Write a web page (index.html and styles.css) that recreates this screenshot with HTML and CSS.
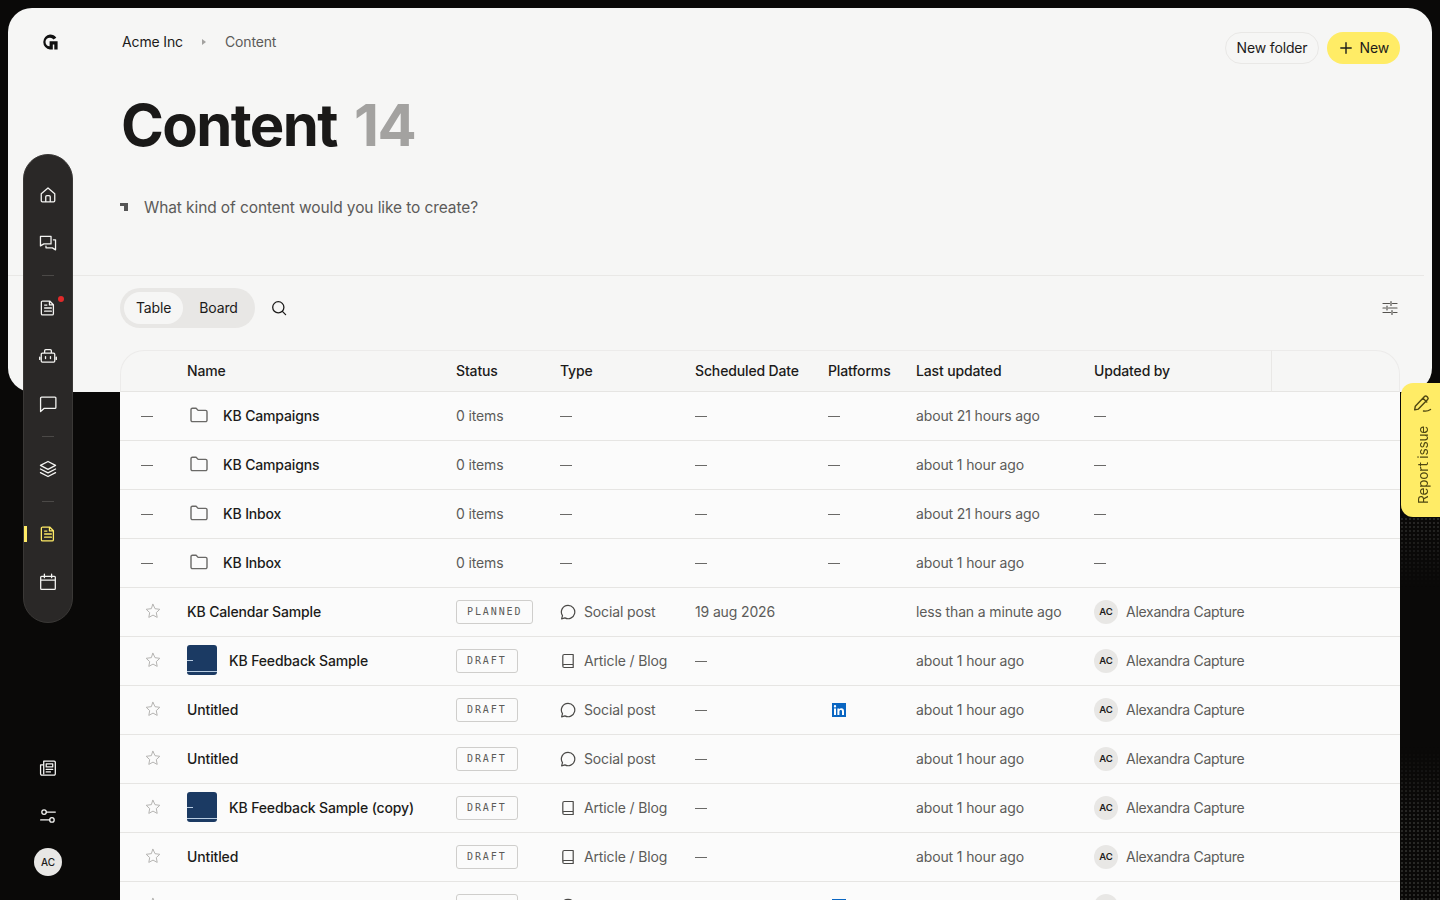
FILE: index.html
```html
<!DOCTYPE html>
<html lang="en">
<head>
    <meta charset="UTF-8">
    <meta name="viewport" content="width=device-width, initial-scale=1.0">
    <title>Content</title>
    <link rel="stylesheet" href="styles.css">
</head>
<body>

    <svg width="0" height="0" class="defs">
        <symbol id="i-doc" viewBox="0 0 16 16"><path d="M3.2 1.800h6.300l3.300 3.300v8a1.100 1.100 0 0 1-1.100 1.100H3.200a1.100 1.100 0 0 1-1.100-1.100V2.900a1.100 1.100 0 0 1 1.100-1.100zM9.300 1.800v3.500h3.500M5 8h6M5 10.800h6M5 5.400h2"/></symbol>
        <symbol id="i-folder" viewBox="0 0 18 16"><path d="M1 2.600A1.400 1.400 0 0 1 2.400 1.200h3.700l2 2.200h7.500A1.400 1.400 0 0 1 17 4.800v8.400a1.400 1.400 0 0 1-1.400 1.400H2.400A1.400 1.400 0 0 1 1 13.200z"/></symbol>
        <symbol id="i-star" viewBox="0 0 16 16"><path d="M8 1.300l2 4.400 4.800.6-3.500 3.300.9 4.800L8 12.100l-4.200 2.300.9-4.800L1.200 6.300 6 5.700z"/></symbol>
        <symbol id="i-bubble" viewBox="0 0 16 16"><path d="M8 1.300a6.700 6.700 0 1 1-3.100 12.600l-3.300.9.900-3.100A6.700 6.700 0 0 1 8 1.300z"/></symbol>
        <symbol id="i-book" viewBox="0 0 16 16"><path d="M2.800 12.500V3a1.500 1.500 0 0 1 1.500-1.500h8.900v13H4.300a1.500 1.500 0 0 1 0-3h8.900"/></symbol>
    </svg>

    <div class="panel-bg"></div>

    <a class="logo" href="#">
        <svg viewBox="0 0 16 16" width="16" height="16"><path class="logo-mark" d="M8 0.500a7.500 7.500 0 0 1 6.300 3.300l-2.800 1.700A4.200 4.200 0 0 0 8 3.700a4.300 4.300 0 0 0-.4 8.600V7.300h8v8.300h-3.300v-5h-1.500v5H8a7.600 7.600 0 0 1 0-15.100z"/></svg>
    </a>

    <!-- rail -->
    <nav class="rail">
        <a class="rail-item" href="#"><svg viewBox="0 0 16 16"><path d="M2 6.800L8 1.800l6 5v6.400a1 1 0 0 1-1 1H3a1 1 0 0 1-1-1zM6 14.200V9.500a1 1 0 0 1 1-1h2a1 1 0 0 1 1 1v4.700"/></svg></a>
        <a class="rail-item" href="#"><svg viewBox="0 0 16 16"><path d="M1.300 2.200h9.400v6.600H4.300l-3 1.800zM12.800 5.200h1.900v8.900l-2.800-1.800H6.200v-1.600"/></svg></a>
        <span class="rail-sep"></span>
        <a class="rail-item rail-dot" href="#"><svg><use href="#i-doc"/></svg></a>
        <a class="rail-item" href="#"><svg viewBox="0 0 16 16"><path d="M3 5.500h10a1 1 0 0 1 1 1v6a1 1 0 0 1-1 1H3a1 1 0 0 1-1-1v-6a1 1 0 0 1 1-1zM5 5.500V3.300a1 1 0 0 1 1-1h4a1 1 0 0 1 1 1v2.200M5.800 8.500v1.800M10.200 8.500v1.800M.6 9v2M15.400 9v2"/></svg></a>
        <a class="rail-item" href="#"><svg viewBox="0 0 16 16"><path d="M2.300 1.900h11.900a.8.800 0 0 1 .8.800v8.300a.8.800 0 0 1-.8.800H4.700L1.400 14.700V2.800a.9.900 0 0 1 .9-.9z"/></svg></a>
        <span class="rail-sep"></span>
        <a class="rail-item" href="#"><svg viewBox="0 0 16 16"><path d="M8 1.300l6.700 3.500L8 8.300 1.300 4.800zM1.300 8L8 11.500 14.700 8M1.300 11.200L8 14.700l6.700-3.500"/></svg></a>
        <span class="rail-sep"></span>
        <a class="rail-item active" href="#"><svg><use href="#i-doc"/></svg></a>
        <a class="rail-item" href="#"><svg viewBox="0 0 16 16"><path d="M2.300 3h11.400a.8.800 0 0 1 .8.800v10a.8.800 0 0 1-.8.800H2.300a.8.800 0 0 1-.8-.8v-10a.8.800 0 0 1 .8-.8zM1.500 6.400h13M4.800 1v3.200M11.200 1v3.200"/></svg></a>
    </nav>

    <div class="rail-bottom">
        <a class="rail-item" href="#"><svg viewBox="0 0 16 16"><path d="M4.200 1.800h9.300a1 1 0 0 1 1 1v10.400a1.100 1.100 0 0 1-1.100 1.100H2.600a1.200 1.200 0 0 1-1.200-1.200V5.200h2.800M4.200 13V1.800M6.400 4.300h5.800v2.700H6.400zM6.400 9.300h5.800M6.400 11.500h3.800"/></svg></a>
        <a class="rail-item" href="#"><svg viewBox="0 0 16 16"><circle cx="4.500" cy="4.500" r="2"/><circle cx="11.500" cy="11.500" r="2"/><path d="M6.500 4.500h8M1.500 11.500h8"/></svg></a>
        <span class="rail-avatar">AC</span>
    </div>

    <div class="report">
        <svg viewBox="0 0 20 20"><path d="M3.300 13.200L12.500 3.500a1.700 1.700 0 0 1 2.400 0l.7.700a1.700 1.700 0 0 1 0 2.400l-9.200 9.500-3.700.8zM11 5.200l3.800 3.700M11.500 18c2.500.4 5-.1 7-1.500"/></svg>
        <span>Report issue</span>
    </div>

    <main class="main">
        <header class="topbar">
            <div class="crumbs">
                <a href="#">Acme Inc</a>
                <span class="crumb-arrow"></span>
                <span class="crumb-current">Content</span>
            </div>
            <div class="actions">
                <button class="btn btn-ghost">New folder</button>
                <button class="btn btn-new"><svg viewBox="0 0 12 12"><path d="M6 .8v10.400M.8 6h10.400"/></svg>New</button>
            </div>
        </header>

        <h1 class="title">Content <span>14</span></h1>

        <div class="prompt">
            <span class="prompt-mark"></span>
            <span>What kind of content would you like to create?</span>
        </div>

        <div class="divider"></div>

        <div class="toolbar">
            <div class="views">
                <button class="view on">Table</button>
                <button class="view">Board</button>
            </div>
            <button class="icon-btn"><svg viewBox="0 0 16 16"><circle cx="7.300" cy="7.300" r="5.600"/><path d="M11.400 11.400l3.200 3.200"/></svg></button>
            <button class="icon-btn settings"><svg viewBox="0 0 16 16"><path d="M1 3.500h6.500M10.500 3.500H15M1 8h2.500M6.500 8H15M1 12.500h7.500M11.500 12.500H15M9 1.500v4M5 6v4M10 10.500v4"/></svg></button>
        </div>

        <table class="grid">
            <colgroup>
                <col class="c-star"><col class="c-name"><col class="c-status"><col class="c-type"><col class="c-date"><col class="c-plat"><col class="c-upd"><col class="c-by"><col>
            </colgroup>
            <thead>
                <tr>
                    <th></th><th>Name</th><th>Status</th><th>Type</th><th>Scheduled Date</th><th>Platforms</th><th>Last updated</th><th class="th-by">Updated by</th><th></th>
                </tr>
            </thead>
            <tbody>
                <tr>
                    <td class="dash-cell"><i class="dash"></i></td>
                    <td><div class="name folder"><svg><use href="#i-folder"/></svg>KB Campaigns</div></td>
                    <td class="muted">0 items</td><td><i class="dash"></i></td><td><i class="dash"></i></td><td><i class="dash"></i></td>
                    <td class="muted">about 21 hours ago</td><td><i class="dash"></i></td><td></td>
                </tr>
                <tr>
                    <td class="dash-cell"><i class="dash"></i></td>
                    <td><div class="name folder"><svg><use href="#i-folder"/></svg>KB Campaigns</div></td>
                    <td class="muted">0 items</td><td><i class="dash"></i></td><td><i class="dash"></i></td><td><i class="dash"></i></td>
                    <td class="muted">about 1 hour ago</td><td><i class="dash"></i></td><td></td>
                </tr>
                <tr>
                    <td class="dash-cell"><i class="dash"></i></td>
                    <td><div class="name folder"><svg><use href="#i-folder"/></svg>KB Inbox</div></td>
                    <td class="muted">0 items</td><td><i class="dash"></i></td><td><i class="dash"></i></td><td><i class="dash"></i></td>
                    <td class="muted">about 21 hours ago</td><td><i class="dash"></i></td><td></td>
                </tr>
                <tr>
                    <td class="dash-cell"><i class="dash"></i></td>
                    <td><div class="name folder"><svg><use href="#i-folder"/></svg>KB Inbox</div></td>
                    <td class="muted">0 items</td><td><i class="dash"></i></td><td><i class="dash"></i></td><td><i class="dash"></i></td>
                    <td class="muted">about 1 hour ago</td><td><i class="dash"></i></td><td></td>
                </tr>
                <tr>
                    <td class="star-cell"><svg class="star"><use href="#i-star"/></svg></td>
                    <td><div class="name">KB Calendar Sample</div></td>
                    <td><span class="tag">PLANNED</span></td>
                    <td><div class="type"><svg><use href="#i-bubble"/></svg>Social post</div></td>
                    <td class="muted">19 aug 2026</td><td></td>
                    <td class="muted">less than a minute ago</td>
                    <td><div class="who"><span class="avatar">AC</span>Alexandra Capture</div></td><td></td>
                </tr>
                <tr>
                    <td class="star-cell"><svg class="star"><use href="#i-star"/></svg></td>
                    <td><div class="name"><span class="thumb"></span>KB Feedback Sample</div></td>
                    <td><span class="tag">DRAFT</span></td>
                    <td><div class="type"><svg><use href="#i-book"/></svg>Article / Blog</div></td>
                    <td><i class="dash"></i></td><td></td>
                    <td class="muted">about 1 hour ago</td>
                    <td><div class="who"><span class="avatar">AC</span>Alexandra Capture</div></td><td></td>
                </tr>
                <tr>
                    <td class="star-cell"><svg class="star"><use href="#i-star"/></svg></td>
                    <td><div class="name">Untitled</div></td>
                    <td><span class="tag">DRAFT</span></td>
                    <td><div class="type"><svg><use href="#i-bubble"/></svg>Social post</div></td>
                    <td><i class="dash"></i></td>
                    <td><svg class="linkedin" viewBox="0 0 14 14"><rect width="14" height="14" fill="#0a66c2"/><path fill="#fff" d="M2 5.400h2V12H2zM3 2a1.200 1.200 0 1 1 0 2.400A1.200 1.200 0 0 1 3 2zM5.400 5.400h1.900v.9c.4-.7 1.100-1.100 2-1.100 1.900 0 2.700 1.100 2.700 3V12h-2V8.600c0-1-.3-1.700-1.200-1.700-1 0-1.400.7-1.400 1.700V12h-2z"/></svg></td>
                    <td class="muted">about 1 hour ago</td>
                    <td><div class="who"><span class="avatar">AC</span>Alexandra Capture</div></td><td></td>
                </tr>
                <tr>
                    <td class="star-cell"><svg class="star"><use href="#i-star"/></svg></td>
                    <td><div class="name">Untitled</div></td>
                    <td><span class="tag">DRAFT</span></td>
                    <td><div class="type"><svg><use href="#i-bubble"/></svg>Social post</div></td>
                    <td><i class="dash"></i></td><td></td>
                    <td class="muted">about 1 hour ago</td>
                    <td><div class="who"><span class="avatar">AC</span>Alexandra Capture</div></td><td></td>
                </tr>
                <tr>
                    <td class="star-cell"><svg class="star"><use href="#i-star"/></svg></td>
                    <td><div class="name"><span class="thumb"></span>KB Feedback Sample (copy)</div></td>
                    <td><span class="tag">DRAFT</span></td>
                    <td><div class="type"><svg><use href="#i-book"/></svg>Article / Blog</div></td>
                    <td><i class="dash"></i></td><td></td>
                    <td class="muted">about 1 hour ago</td>
                    <td><div class="who"><span class="avatar">AC</span>Alexandra Capture</div></td><td></td>
                </tr>
                <tr>
                    <td class="star-cell"><svg class="star"><use href="#i-star"/></svg></td>
                    <td><div class="name">Untitled</div></td>
                    <td><span class="tag">DRAFT</span></td>
                    <td><div class="type"><svg><use href="#i-book"/></svg>Article / Blog</div></td>
                    <td><i class="dash"></i></td><td></td>
                    <td class="muted">about 1 hour ago</td>
                    <td><div class="who"><span class="avatar">AC</span>Alexandra Capture</div></td><td></td>
                </tr>
                <tr>
                    <td class="star-cell"><svg class="star"><use href="#i-star"/></svg></td>
                    <td><div class="name">Untitled</div></td>
                    <td><span class="tag">DRAFT</span></td>
                    <td><div class="type"><svg><use href="#i-bubble"/></svg>Social post</div></td>
                    <td><i class="dash"></i></td>
                    <td><svg class="linkedin" viewBox="0 0 14 14"><rect width="14" height="14" fill="#0a66c2"/></svg></td>
                    <td class="muted">about 1 hour ago</td>
                    <td><div class="who"><span class="avatar">AC</span>Alexandra Capture</div></td><td></td>
                </tr>
            </tbody>
        </table>
    </main>

</body>
</html>
```

FILE: styles.css
```css
* {
    box-sizing: border-box;
}

html, body {
    height: 100%;
}

body {
    margin: 0;
    background: #0a0908;
    color: #1c1b1a;
    font-family: Inter, "Liberation Sans", sans-serif;
    font-size: 14px;
    letter-spacing: -0.01em;
    overflow: hidden;
    position: relative;
}

a {
    color: inherit;
    text-decoration: none;
}

button {
    font: inherit;
    letter-spacing: inherit;
    color: inherit;
    border: none;
    background: none;
    padding: 0;
}

.defs {
    position: absolute;
}

svg {
    fill: none;
    stroke: currentColor;
    stroke-linecap: round;
    stroke-linejoin: round;
}

/* the light card behind the header */
.panel-bg {
    position: absolute;
    top: 8px;
    left: 8px;
    right: 8px;
    height: 384px;
    background: #f6f6f5;
    border-radius: 24px;
}

/* dots on the black background */
body::after {
    content: "";
    position: absolute;
    top: 517px;
    right: 0;
    width: 40px;
    height: 383px;
    background-image: radial-gradient(circle, #3a3a38 0.6px, transparent 0.9px);
    background-size: 4px 4px;
    -webkit-mask-image: linear-gradient(to bottom, #000 0, transparent 70px, transparent 230px, #000 300px);
    mask-image: linear-gradient(to bottom, #000 0, transparent 70px, transparent 230px, #000 300px);
}

.logo {
    position: absolute;
    top: 34px;
    left: 42px;
    width: 16px;
    height: 16px;
    z-index: 3;
}

.logo svg {
    display: block;
}

.logo-mark {
    fill: #111;
    stroke: none;
}

/* rail */
.rail {
    position: absolute;
    top: 154px;
    left: 23px;
    width: 50px;
    height: 469px;
    padding-top: 16px;
    background: #2a2827;
    border: 1px solid #3a3836;
    border-radius: 25px;
    z-index: 3;
    display: flex;
    flex-direction: column;
    align-items: center;
}

.rail-item {
    width: 48px;
    height: 48px;
    display: flex;
    align-items: center;
    justify-content: center;
    color: #f4f4f2;
    position: relative;
    flex: none;
}

.rail-item svg {
    width: 18px;
    height: 18px;
    stroke-width: 1.15;
}

.rail-sep {
    width: 12px;
    height: 1px;
    margin: 8px 0;
    background: #4b4947;
    flex: none;
}

.rail-dot::after {
    content: "";
    position: absolute;
    top: 12px;
    right: 8px;
    width: 6px;
    height: 6px;
    background: #e02a2a;
    border-radius: 50%;
}

.rail-item.active {
    color: #ffeb66;
}

.rail-item.active::before {
    content: "";
    position: absolute;
    left: 0;
    top: 16px;
    width: 3px;
    height: 16px;
    background: #ffeb66;
}

.rail-bottom {
    position: absolute;
    left: 24px;
    top: 744px;
    width: 48px;
    display: flex;
    flex-direction: column;
    align-items: center;
    z-index: 3;
}

.rail-avatar {
    width: 28px;
    height: 28px;
    margin-top: 8px;
    border-radius: 50%;
    background: #e8e7e5;
    color: #1c1b1a;
    font-size: 10px;
    font-weight: 500;
    display: flex;
    align-items: center;
    justify-content: center;
}

/* report tab */
.report {
    position: absolute;
    top: 383px;
    right: 0;
    width: 39px;
    height: 134px;
    padding-top: 10px;
    background: #ffec66;
    border-radius: 12px 0 0 12px;
    color: #4f4712;
    display: flex;
    flex-direction: column;
    align-items: center;
    gap: 13px;
    z-index: 3;
    font-size: 13.5px;
}

.report svg {
    width: 20px;
    height: 20px;
    margin-left: 2px;
    stroke-width: 1.4;
    flex: none;
}

.report span {
    writing-mode: vertical-rl;
    transform: rotate(180deg);
    margin-left: 4px;
}

/* page */
.main {
    position: relative;
    padding: 0 40px 0 120px;
    z-index: 1;
}

.topbar {
    height: 64px;
    padding-top: 32px;
    display: flex;
    justify-content: space-between;
    align-items: flex-start;
}

.crumbs {
    display: flex;
    align-items: center;
    height: 20px;
    line-height: 20px;
    padding-left: 2px;
}

.crumb-arrow {
    width: 0;
    height: 0;
    margin: 0 19px;
    border-left: 4px solid #a3a2a0;
    border-top: 3.5px solid transparent;
    border-bottom: 3.5px solid transparent;
}

.crumb-current {
    color: #5c5b59;
}

.actions {
    display: flex;
    gap: 8px;
}

.btn {
    height: 32px;
    padding: 0 10px 1px;
    border-radius: 16px;
    display: flex;
    align-items: center;
}

.btn-ghost {
    border: 1px solid #e9e8e6;
}

.btn-new {
    background: #ffec66;
    padding: 0 11px 1px 13px;
    gap: 8px;
}

.btn-new svg {
    width: 12px;
    height: 12px;
    stroke-width: 1.4;
}

.title {
    margin: 24px 0 0 1px;
    font-size: 58px;
    line-height: 74px;
    font-weight: 750;
    letter-spacing: -1.6px;
    color: #1a1918;
}

.title span {
    margin-left: 5px;
    color: #a3a2a0;
}

.prompt {
    margin-top: 33px;
    height: 24px;
    display: flex;
    align-items: center;
    gap: 16px;
    font-size: 15.5px;
    letter-spacing: -0.1px;
    color: #5c5b59;
}

.prompt-mark {
    width: 8px;
    height: 8px;
    background: linear-gradient(#555 0 0) right top / 8px 3px no-repeat, linear-gradient(#555 0 0) right top / 4px 8px no-repeat;
}

.divider {
    height: 1px;
    margin: 56px -24px 0 -112px;
    background: #e9e8e6;
}

.toolbar {
    margin-top: 12px;
    height: 40px;
    display: flex;
    align-items: center;
}

.views {
    width: 135px;
    height: 40px;
    padding: 4px;
    border-radius: 20px;
    background: #e8e7e5;
    display: flex;
    align-items: center;
}

.view {
    height: 32px;
    padding: 0 12px 1px;
    border-radius: 16px;
}

.view + .view {
    margin-left: 4px;
}

.view.on {
    background: #f6f6f5;
}

.icon-btn {
    width: 16px;
    height: 16px;
    margin-left: 16px;
}

.icon-btn svg {
    display: block;
    width: 16px;
    height: 16px;
    stroke-width: 1.3;
}

.icon-btn.settings {
    margin-left: auto;
    margin-right: 2px;
    color: #55534f;
}

.icon-btn.settings svg {
    stroke-width: 1.2;
}

/* table */
.grid {
    margin-top: 22px;
    width: 1280px;
    table-layout: fixed;
    border-collapse: separate;
    border-spacing: 0;
}

.c-star { width: 67px; }
.c-name { width: 269px; }
.c-status { width: 104px; }
.c-type { width: 135px; }
.c-date { width: 133px; }
.c-plat { width: 88px; }
.c-upd { width: 178px; }
.c-by { width: 178px; }

.grid th {
    height: 42px;
    padding: 0 0 2px;
    text-align: left;
    font-weight: 450;
    background: #f6f6f5;
    border-top: 1px solid #ecebea;
    border-bottom: 1px solid #e6e5e3;
}

.grid th:first-child {
    border-left: 1px solid #ecebea;
    border-top-left-radius: 24px;
}

.grid th:last-child {
    border-right: 1px solid #ecebea;
    border-top-right-radius: 24px;
}

.th-by {
    border-right: 1px solid #e9e8e6;
}

.grid td {
    height: 49px;
    padding: 0 0 2px;
    background: #fbfbfb;
    border-bottom: 1px solid #e6e5e3;
    white-space: nowrap;
}

.muted {
    color: #5c5b59;
}

.dash {
    display: block;
    width: 12px;
    height: 1px;
    margin-top: 2px;
    background: #6a6967;
}

.dash-cell .dash {
    margin-left: 21px;
}

.grid .star-cell {
    padding-left: 25px;
}

.star {
    display: block;
    width: 16px;
    height: 16px;
    color: #b5b4b2;
    stroke-width: 1;
}

.name {
    display: flex;
    align-items: center;
    gap: 12px;
    font-weight: 450;
}

.name.folder {
    padding-left: 3px;
    gap: 15px;
}

.folder svg {
    width: 18px;
    height: 16px;
    color: #6a6967;
    stroke-width: 1.4;
}

.thumb {
    width: 30px;
    height: 30px;
    border-radius: 3px;
    background: linear-gradient(#b9cde2 0 0) left 0 top 15px / 6px 1px no-repeat, linear-gradient(#b9cde2 0 0) left 0 bottom 3px / 100% 1px no-repeat, #1b3a63;
}

.tag {
    display: block;
    width: fit-content;
    height: 24px;
    margin-top: 2px;
    padding: 0 10px;
    border: 1px solid #cfcecc;
    border-radius: 3px;
    line-height: 22px;
    font-family: "DejaVu Sans Mono", monospace;
    font-size: 10px;
    letter-spacing: 1.9px;
    color: #5c5b59;
}

.type {
    display: flex;
    align-items: center;
    gap: 8px;
    color: #5c5b59;
}

.type svg {
    width: 16px;
    height: 16px;
    margin-top: 2px;
    color: #4a4947;
    stroke-width: 1.2;
}

.linkedin {
    display: block;
    width: 14px;
    height: 14px;
    margin: 2px 0 0 4px;
    stroke: none;
}

.who {
    display: flex;
    align-items: center;
    gap: 8px;
    color: #5c5b59;
    letter-spacing: -0.02em;
}

.avatar {
    width: 24px;
    height: 24px;
    margin-top: 2px;
    padding-bottom: 1px;
    border-radius: 50%;
    background: #e8e7e5;
    color: #1c1b1a;
    font-size: 9.5px;
    font-weight: 600;
    letter-spacing: 0;
    display: flex;
    align-items: center;
    justify-content: center;
}
```
